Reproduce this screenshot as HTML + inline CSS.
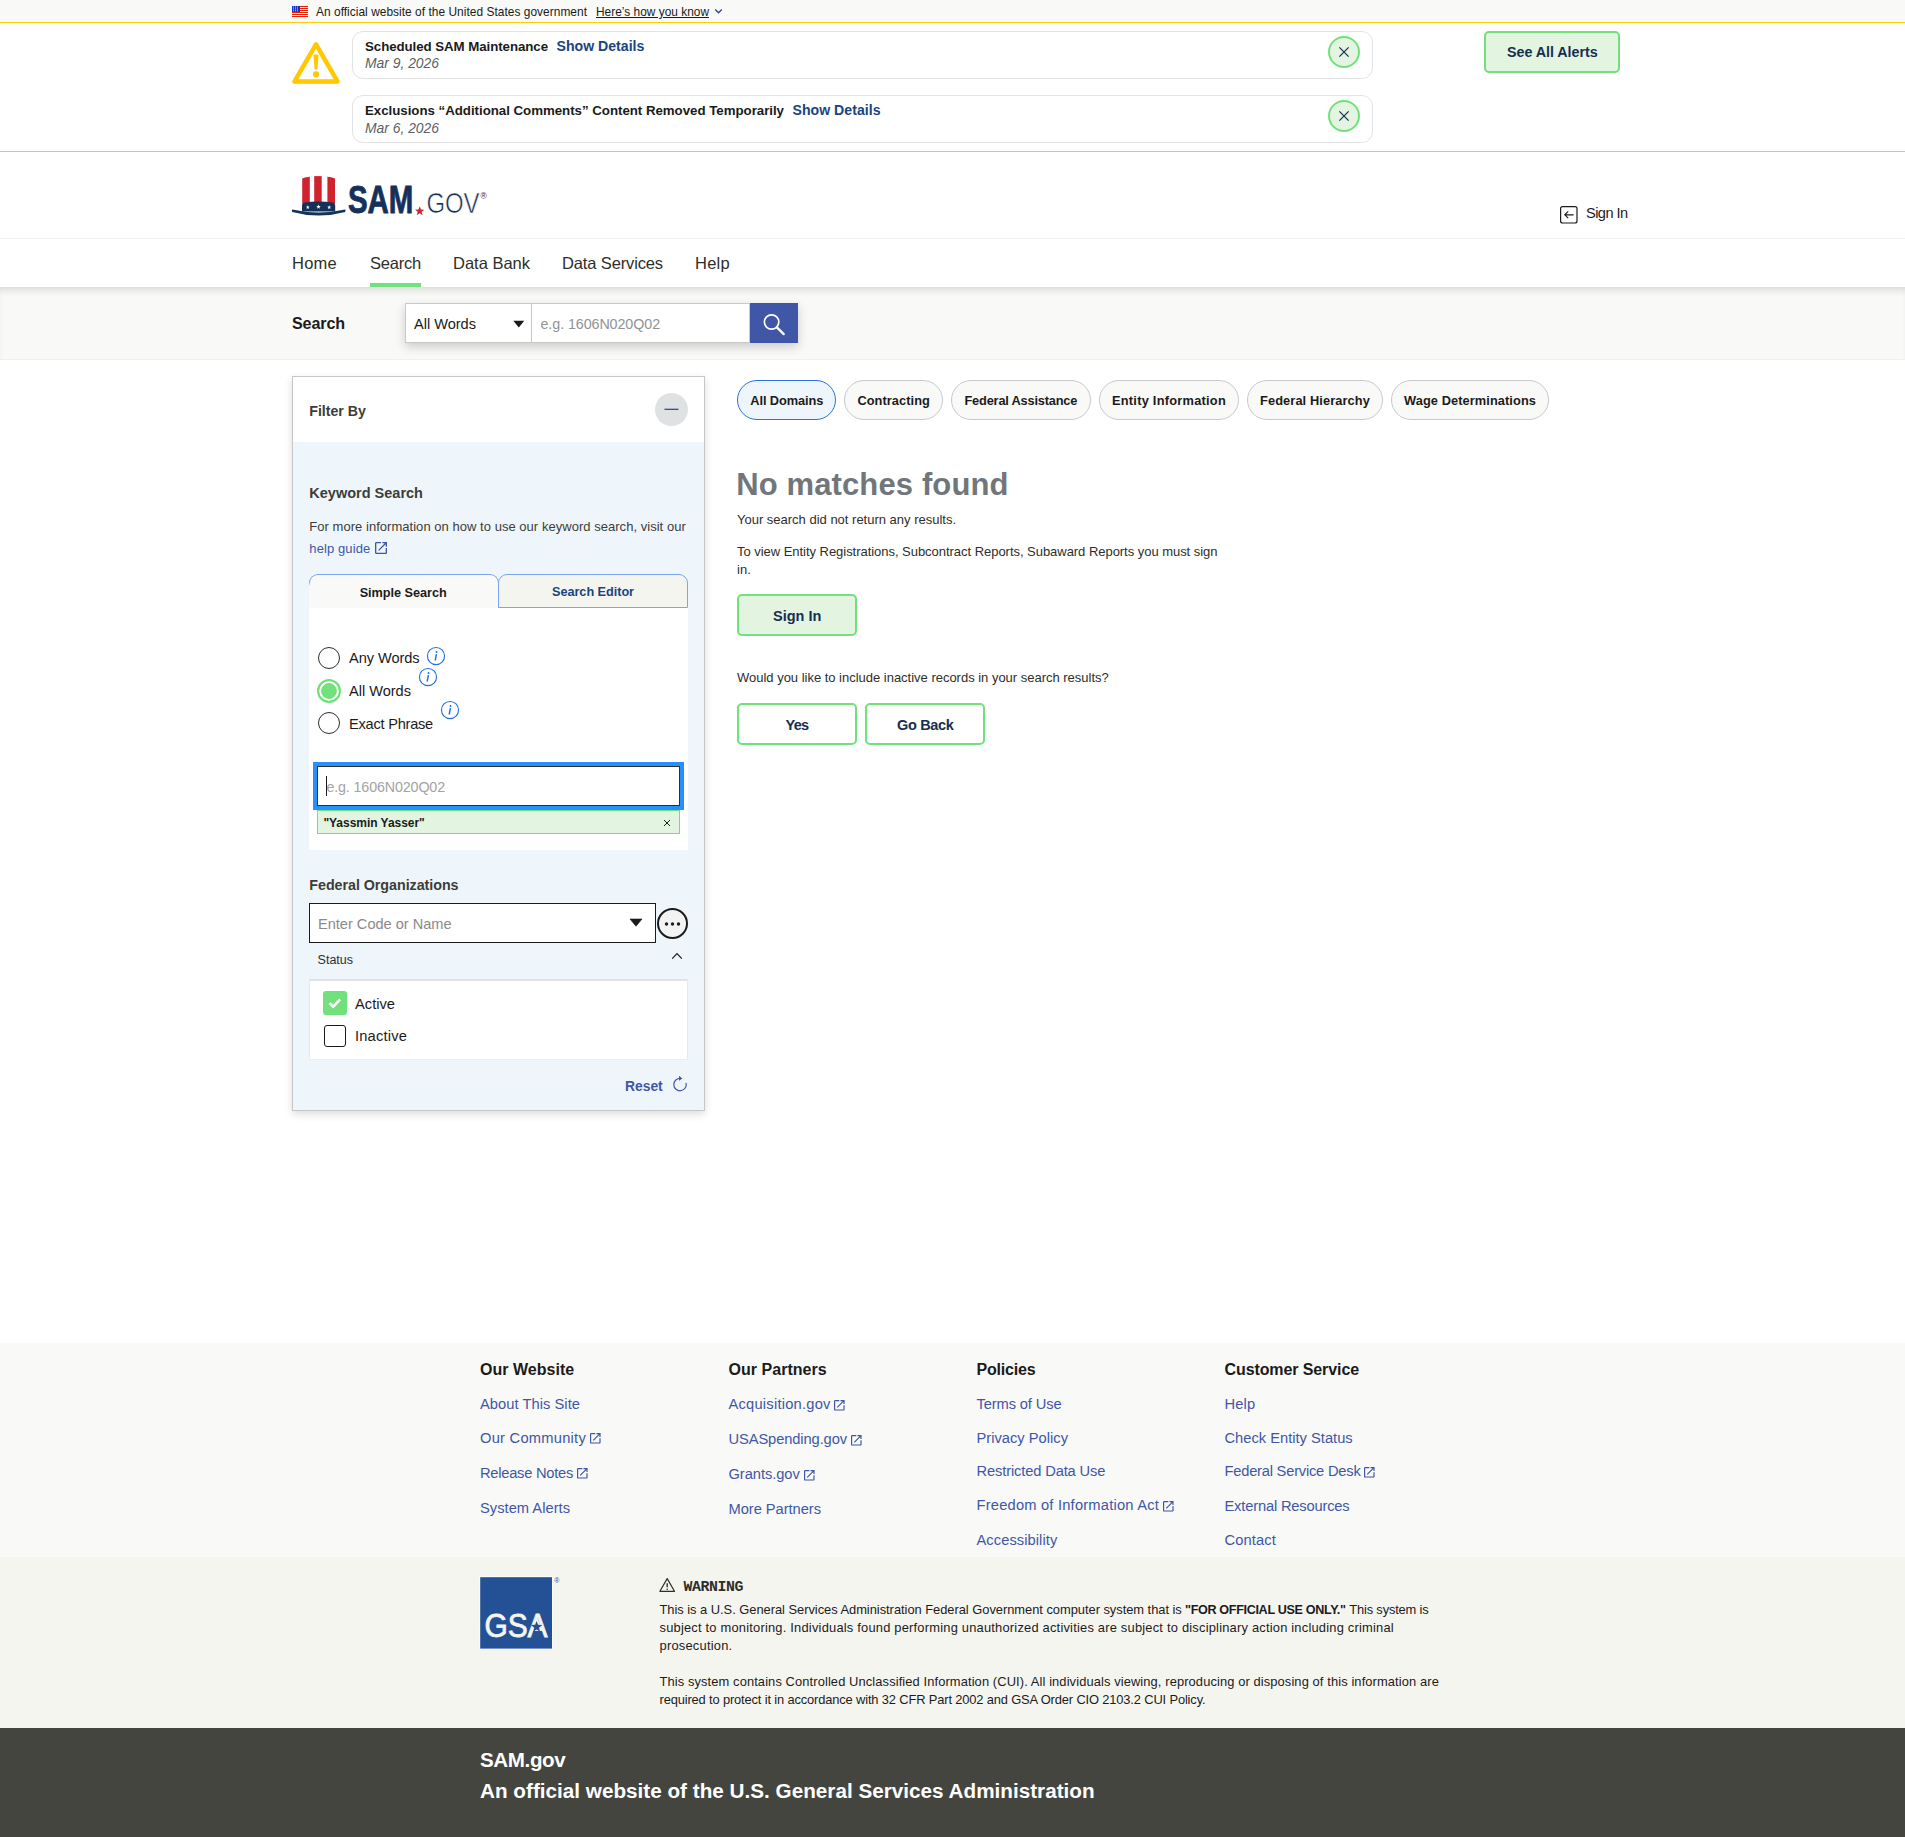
<!DOCTYPE html>
<html lang="en">
<head>
<meta charset="utf-8">
<title>SAM.gov | Search</title>
<style>

*{box-sizing:border-box;margin:0;padding:0}
html,body{background:#fff}
body{font-family:"Liberation Sans", Arial, sans-serif;color:#1b1b1b;width:1905px;height:1837px;overflow:hidden;position:relative;-webkit-font-smoothing:antialiased}
#page{position:relative;width:1905px;height:1837px;overflow:hidden;background:#fff}
#page section,#page header,#page nav,#page main,#page aside,#page footer,#page form,#page ul,#page li,#page fieldset{position:static;list-style:none;border:0}
.a{position:absolute;display:block}
.t{position:absolute;display:block;white-space:nowrap;line-height:1;text-decoration:none;color:#1b1b1b}
a.t{color:#3f57a6}
svg{position:absolute;overflow:visible}
button{font-family:inherit;cursor:pointer}
.btn{position:absolute;border:2px solid #70e17b;border-radius:5px;background:#e3f5e1}
.btn.o{background:#fff}
.pill{position:absolute;height:40px;top:380px;border:1px solid #c6cace;border-radius:20px;background:#f9f9f7}
.pill.on{border-color:#2672de;background:#eff6fb}
.card{position:absolute;left:352px;width:1021px;height:48px;border:1px solid #e3e3e3;border-radius:11px;background:#fff}
.x{position:absolute;width:32px;height:32px;border-radius:50%;border:2px solid #70e17b;background:#e3f5e1}
.radio{position:absolute;width:22px;height:22px;border-radius:50%;border:1.3px solid #2e2e2a;background:#fff}
.radio.on{width:24px;height:24px;border:2.3px solid #70e17b;box-shadow:inset 0 0 0 2.1px #fff;background:#70e17b}
input{font-family:inherit}
input::placeholder{color:var(--ph);opacity:1}

</style>
</head>
<body>
<div id="page">
<section class="usa-banner" aria-label="Official government website">
<div class="a" style="left:0;top:0;width:1905px;height:22px;background:#f9f9f7"></div>
<svg style="left:292px;top:6px" width="16" height="11" viewBox="0 0 16 11" aria-hidden="true"><rect width="16" height="11" fill="#fff"/><rect y="-0.05" width="16" height="1.05" fill="#e52207"/><rect y="1.95" width="16" height="1.05" fill="#e52207"/><rect y="3.95" width="16" height="1.05" fill="#e52207"/><rect y="5.95" width="16" height="1.05" fill="#e52207"/><rect y="7.95" width="16" height="1.05" fill="#e52207"/><rect y="9.95" width="16" height="1.05" fill="#e52207"/><rect width="8" height="6" fill="#1230c4"/><rect x="0.95" y="0.55" width="0.9" height="0.9" fill="#fff"/><rect x="2.95" y="0.55" width="0.9" height="0.9" fill="#fff"/><rect x="4.95" y="0.55" width="0.9" height="0.9" fill="#fff"/><rect x="0.95" y="2.45" width="0.9" height="0.9" fill="#fff"/><rect x="2.95" y="2.45" width="0.9" height="0.9" fill="#fff"/><rect x="4.95" y="2.45" width="0.9" height="0.9" fill="#fff"/><rect x="0.95" y="4.35" width="0.9" height="0.9" fill="#fff"/><rect x="2.95" y="4.35" width="0.9" height="0.9" fill="#fff"/><rect x="4.95" y="4.35" width="0.9" height="0.9" fill="#fff"/></svg>
<span class="t" style="left:316.00px;top:5px;font-size:11.9px;line-height:14px;letter-spacing:0.043px;">An official website of the United States government</span>
<a href="#" class="t" style="left:596.00px;top:5px;font-size:11.9px;line-height:14px;color:#1b1b1b;letter-spacing:0.010px;text-decoration:underline;">Here’s how you know</a>
<svg style="left:714px;top:8px" width="9" height="7" viewBox="0 0 9 7"><path d="M1.2 1.5 L4.5 4.8 L7.8 1.5" fill="none" stroke="#2f4a9c" stroke-width="1.4"/></svg>
</section>
<section class="alerts" aria-label="System alerts">
<div class="a" style="left:0;top:22px;width:1905px;height:130px;background:#fff;border-top:1px solid #fdcb08;border-bottom:1px solid #fdcb08"></div>
<svg style="left:290px;top:40px" width="52" height="46" viewBox="290 40 52 46" aria-hidden="true"><path d="M316 44.4 L294.4 81.6 L337.6 81.6 Z" fill="none" stroke="#ffc800" stroke-width="4.5" stroke-linejoin="round"/><path d="M313.4 55.2 Q316 53.2 318.6 55.2 L317.4 69.5 L314.6 69.5 Z" fill="#ffc800"/><circle cx="316" cy="74.3" r="3.1" fill="#ffc800"/></svg>
<article class="card" style="top:31px">
<strong class="t" style="left:12.00px;top:7px;font-size:13.3px;line-height:15px;font-weight:700;letter-spacing:-0.069px;">Scheduled SAM Maintenance</strong>
<a href="#" class="t" style="left:203.60px;top:6px;font-size:14.1px;line-height:16px;font-weight:700;color:#1a4480;">Show Details</a>
<time class="t" style="left:12.00px;top:23px;font-size:13.9px;line-height:16px;font-style:italic;color:#5c5f63;letter-spacing:-0.013px;">Mar 9, 2026</time>
<button class="x" style="left:975px;top:4px" aria-label="Close alert"><svg style="left:7.5px;top:7.5px" width="12" height="12" viewBox="0 0 12 12"><path d="M1.4 1.4 L10.6 10.6 M10.6 1.4 L1.4 10.6" stroke="#162e51" stroke-width="1.25" fill="none"/></svg></button></article>
<article class="card" style="top:95px">
<strong class="t" style="left:12.00px;top:7px;font-size:13.3px;line-height:15px;font-weight:700;letter-spacing:-0.032px;">Exclusions “Additional Comments” Content Removed Temporarily</strong>
<a href="#" class="t" style="left:439.50px;top:6px;font-size:14.1px;line-height:16px;font-weight:700;color:#1a4480;letter-spacing:0.023px;">Show Details</a>
<time class="t" style="left:12.00px;top:24px;font-size:13.9px;line-height:16px;font-style:italic;color:#5c5f63;letter-spacing:-0.013px;">Mar 6, 2026</time>
<button class="x" style="left:975px;top:4px" aria-label="Close alert"><svg style="left:7.5px;top:7.5px" width="12" height="12" viewBox="0 0 12 12"><path d="M1.4 1.4 L10.6 10.6 M10.6 1.4 L1.4 10.6" stroke="#162e51" stroke-width="1.25" fill="none"/></svg></button></article>
<button class="btn" style="left:1484px;top:31px;width:136px;height:42px"><span class="t" style="left:21.00px;top:11px;font-size:14.3px;line-height:16px;font-weight:700;color:#162e51;letter-spacing:-0.038px;">See All Alerts</span></button>
</section>
<header>
<div class="a" style="left:0;top:238px;width:1905px;height:1px;background:#f3f3ef"></div>
<svg style="left:288px;top:172px" width="204" height="48" viewBox="288 172 204 48" role="img" aria-label="SAM.gov"><path d="M302.2 178.4 Q306 177 309.8 176.7 L309.8 203.5 L302.2 203.5 Z" fill="#d1232f"/><path d="M314.2 176.1 L321.7 176.1 L321.7 203.5 L314.2 203.5 Z" fill="#d1232f"/><path d="M327.4 176.7 Q331.2 177 335 178.4 L335 203.5 L327.4 203.5 Z" fill="#d1232f"/><path d="M302 211.6 L302 205.2 Q302 203 304.6 202.6 Q318.6 200.4 332.6 202.6 Q335.2 203 335.2 205.2 L335.2 211.6 Z" fill="#15315a"/><path d="M292.2 209.6 Q318.6 215.6 345.2 209.6 Q345.9 210.8 345.2 212 Q318.6 219.2 292.2 212 Q291.5 210.8 292.2 209.6 Z" fill="#15315a"/><polygon points="307.80,205.30 308.29,206.62 309.70,206.68 308.60,207.56 308.98,208.92 307.80,208.14 306.62,208.92 307.00,207.56 305.90,206.68 307.31,206.62" fill="#fff"/><polygon points="318.50,204.40 319.09,205.98 320.78,206.06 319.46,207.11 319.91,208.74 318.50,207.81 317.09,208.74 317.54,207.11 316.22,206.06 317.91,205.98" fill="#fff"/><polygon points="329.20,205.30 329.69,206.62 331.10,206.68 330.00,207.56 330.38,208.92 329.20,208.14 328.02,208.92 328.40,207.56 327.30,206.68 328.71,206.62" fill="#fff"/><polygon points="419.70,206.30 420.91,209.54 424.36,209.69 421.66,211.84 422.58,215.16 419.70,213.26 416.82,215.16 417.74,211.84 415.04,209.69 418.49,209.54" fill="#d1232f"/><text x="347.9" y="213" font-family='"Liberation Sans", Arial, sans-serif' font-weight="700" font-size="39.5" fill="#15315a" stroke="#15315a" stroke-width="0.9" stroke-linejoin="round" textLength="65.4" lengthAdjust="spacingAndGlyphs">SAM</text><text x="426.4" y="213.2" font-family='"Liberation Sans", Arial, sans-serif' font-weight="400" font-size="30" fill="#15315a" stroke="#fff" stroke-width="0.6" textLength="53.2" lengthAdjust="spacingAndGlyphs">GOV</text><text x="480.6" y="199" font-family='"Liberation Sans", Arial, sans-serif' font-size="8.5" fill="#15315a">®</text></svg>
<svg style="left:1559px;top:205px" width="20" height="20" viewBox="1559 205 20 20" aria-hidden="true"><rect x="1560.6" y="206.6" width="16.4" height="16.4" rx="2" fill="none" stroke="#1b1b1b" stroke-width="1.2"/><path d="M1573.6 214.8 L1565 214.8 M1568.2 211.4 L1564.8 214.8 L1568.2 218.2" fill="none" stroke="#1b1b1b" stroke-width="1.2"/></svg>
<a href="#" class="t" style="left:1586.00px;top:205px;font-size:14.6px;line-height:16px;color:#1b1b1b;letter-spacing:-0.562px;">Sign In</a>
</header>
<nav aria-label="Primary navigation">
<a href="#" class="t" style="left:292.00px;top:254px;font-size:16.5px;line-height:18px;color:#2e2e2a;letter-spacing:0.246px;">Home</a>
<a href="#" class="t" style="left:370.00px;top:254px;font-size:16.5px;line-height:18px;color:#2e2e2a;letter-spacing:-0.214px;">Search</a>
<a href="#" class="t" style="left:453.00px;top:254px;font-size:16.5px;line-height:18px;color:#2e2e2a;letter-spacing:-0.005px;">Data Bank</a>
<a href="#" class="t" style="left:562.00px;top:254px;font-size:16.5px;line-height:18px;color:#2e2e2a;letter-spacing:-0.132px;">Data Services</a>
<a href="#" class="t" style="left:695.00px;top:254px;font-size:16.5px;line-height:18px;color:#2e2e2a;letter-spacing:0.266px;">Help</a>
<div class="a" style="left:370px;top:283px;width:51px;height:4px;background:#70e17b"></div>
</nav>
<section class="searchbar" aria-label="Search">
<div class="a" style="left:0;top:287px;width:1905px;height:73px;background:#f9f9f7;box-shadow:inset 0 7px 8px -5px rgba(0,0,0,.16);border-bottom:1px solid #f0f0ec"></div>
<span class="t" style="left:292.00px;top:314px;font-size:16.1px;line-height:18px;font-weight:700;letter-spacing:-0.115px;">Search</span>
<div class="a" style="left:405px;top:303px;width:393px;height:40px;box-shadow:0 4px 10px rgba(0,0,0,.18);background:#fff"></div>
<div class="a" style="left:405px;top:303px;width:127px;height:40px;border:1px solid #c9c9c9;background:#fff" role="combobox" aria-label="Search type"><span class="t" style="left:8.00px;top:12px;font-size:14.6px;line-height:16px;letter-spacing:-0.021px;">All Words</span><svg style="left:107px;top:16px" width="12" height="8" viewBox="0 0 12 8"><path d="M0.3 0.8 L11.3 0.8 L5.8 7.4 Z" fill="#1b1b1b"/></svg></div>
<input class="a" type="text" aria-label="Search keywords" placeholder="e.g. 1606N020Q02" style="left:531px;top:303px;width:219px;height:40px;border:1px solid #c9c9c9;padding:2px 0 0 8.50px;font-size:14.3px;line-height:16px;letter-spacing:-0.083px;--ph:#909396;background:#fff;border-radius:0;outline:0;color:#1b1b1b">
<button class="a" style="left:750px;top:303px;width:48px;height:40px;border:0;background:#3f57a6" aria-label="Search"><svg style="left:12px;top:10px" width="26" height="26" viewBox="762 313 26 26"><circle cx="771.6" cy="322" r="7.2" fill="none" stroke="#fff" stroke-width="1.7"/><path d="M776.9 327.4 L783.7 334.1" stroke="#fff" stroke-width="2.3" stroke-linecap="round"/></svg></button>
</section>
<main>
<aside class="filters" aria-label="Filters">
<div class="a" style="left:292px;top:376px;width:413px;height:735px;border:1px solid #c5c6c8;background:#eff6fb;box-shadow:0 3px 8px rgba(0,0,0,.14)"></div>
<div class="a" style="left:293px;top:377px;width:411px;height:65px;background:#fff"></div>
<h2 class="t" style="left:309.30px;top:403px;font-size:14.2px;line-height:16px;font-weight:700;color:#3d3d38;letter-spacing:-0.030px;">Filter By</h2>
<button class="a" style="left:655px;top:393px;width:33px;height:33px;border-radius:50%;border:0;background:#dfe1e2" aria-label="Collapse"><svg style="left:9px;top:15px" width="15" height="3" viewBox="0 0 15 3"><path d="M0.5 1.3 L14.5 1.3" stroke="#1a4480" stroke-width="1.2"/></svg></button>
<h3 class="t" style="left:309.30px;top:485px;font-size:14.5px;line-height:16px;font-weight:700;color:#3d3d38;letter-spacing:0.004px;">Keyword Search</h3>
<span class="t" style="left:309.30px;top:519px;font-size:13.0px;line-height:15px;color:#3d3d38;letter-spacing:0.035px;">For more information on how to use our keyword search, visit our</span>
<a href="#" class="t" style="left:309.30px;top:541px;font-size:13.0px;line-height:15px;color:#3f57a6;letter-spacing:0.100px;">help guide</a>
<svg style="left:375.2px;top:542.2px" width="12" height="12" viewBox="3 3 18 18" aria-hidden="true"><path fill="#3f57a6" d="M19 19H5V5h7V3H5a2 2 0 0 0-2 2v14a2 2 0 0 0 2 2h14c1.1 0 2-.9 2-2v-7h-2v7zM14 3v2h3.59l-9.83 9.83 1.41 1.41L19 6.41V10h2V3h-7z"/></svg>
<div class="a" style="left:309px;top:574px;width:190px;height:34px;border:1px solid #7aa5f2;border-bottom:0;border-radius:9px 9px 0 0;background:#f9f9f7" role="tab" aria-selected="true"><span class="t" style="left:49.70px;top:11px;font-size:12.7px;line-height:14px;font-weight:700;letter-spacing:-0.035px;">Simple Search</span></div><div class="a" style="left:309px;top:582px;width:1px;height:26px;background:linear-gradient(#7aa5f2,#f9f9f7 4px)"></div>
<div class="a" style="left:498px;top:574px;width:190px;height:34px;border:1px solid #7aa5f2;border-radius:9px 9px 0 0;background:#f5f5f0" role="tab"><span class="t" style="left:53.00px;top:10px;font-size:12.7px;line-height:14px;font-weight:700;color:#1a4480;letter-spacing:-0.038px;">Search Editor</span></div>
<div class="a" style="left:309px;top:608px;width:379px;height:242px;background:#fff"></div>
<fieldset>
<span class="radio" style="left:318px;top:647px"></span>
<label class="t" style="left:349.00px;top:650px;font-size:14.6px;line-height:16px;letter-spacing:-0.057px;">Any Words</label>
<svg style="left:426.1px;top:646.1px" width="20" height="20" viewBox="0 0 20 20" aria-hidden="true"><circle cx="10" cy="10" r="8.55" fill="none" stroke="#2672de" stroke-width="1.15"/><circle cx="10.55" cy="6.1" r="1.0" fill="#2672de"/><path d="M10.3 8.7 L9.3 13.9" stroke="#2672de" stroke-width="1.5" stroke-linecap="round" fill="none"/></svg>
<span class="radio on" style="left:317px;top:679px"></span>
<label class="t" style="left:349.00px;top:683px;font-size:14.6px;line-height:16px;letter-spacing:-0.021px;">All Words</label>
<svg style="left:418.3px;top:667.1px" width="20" height="20" viewBox="0 0 20 20" aria-hidden="true"><circle cx="10" cy="10" r="8.55" fill="none" stroke="#2672de" stroke-width="1.15"/><circle cx="10.55" cy="6.1" r="1.0" fill="#2672de"/><path d="M10.3 8.7 L9.3 13.9" stroke="#2672de" stroke-width="1.5" stroke-linecap="round" fill="none"/></svg>
<span class="radio" style="left:318px;top:712px"></span>
<label class="t" style="left:349.00px;top:716px;font-size:14.6px;line-height:16px;letter-spacing:-0.233px;">Exact Phrase</label>
<svg style="left:440.2px;top:700.2px" width="20" height="20" viewBox="0 0 20 20" aria-hidden="true"><circle cx="10" cy="10" r="8.55" fill="none" stroke="#2672de" stroke-width="1.15"/><circle cx="10.55" cy="6.1" r="1.0" fill="#2672de"/><path d="M10.3 8.7 L9.3 13.9" stroke="#2672de" stroke-width="1.5" stroke-linecap="round" fill="none"/></svg>
</fieldset>
<div class="a" style="left:313px;top:762px;width:371px;height:48px;background:#2491ff"></div>
<input class="a" type="text" aria-label="Keyword" placeholder="e.g. 1606N020Q02" style="left:317px;top:766px;width:363px;height:40px;border:1px solid #2e2e2a;padding:2px 0 0 8.40px;font-size:14.3px;line-height:16px;letter-spacing:-0.139px;--ph:#a3a3a3;background:#fff;border-radius:0;outline:0;color:#1b1b1b">
<div class="a" style="left:326px;top:776px;width:1px;height:20px;background:#1b1b1b"></div>
<div class="a" style="left:317px;top:810px;width:363px;height:24px;border:1px solid #70e17b;background:#e3f5e1"><span class="t" style="left:5.40px;top:5px;font-size:12.0px;line-height:14px;font-weight:700;letter-spacing:-0.032px;">"Yassmin Yasser"</span><svg style="left:344.5px;top:7.5px" width="8" height="8" viewBox="0 0 8 8"><path d="M1 1 L7 7 M7 1 L1 7" stroke="#1b1b1b" stroke-width="1.0" fill="none"/></svg></div>
<h3 class="t" style="left:309.30px;top:877px;font-size:14.3px;line-height:16px;font-weight:700;color:#3d3d38;letter-spacing:-0.046px;">Federal Organizations</h3>
<input class="a" type="text" aria-label="Federal Organizations" placeholder="Enter Code or Name" style="left:309px;top:903px;width:347px;height:40px;border:1px solid #1b1b1b;padding:2px 0 0 8.00px;font-size:14.6px;line-height:16px;letter-spacing:-0.014px;--ph:#8a8a8a;background:#fff;border-radius:0;outline:0;color:#1b1b1b">
<svg style="left:629px;top:918px" width="14" height="9" viewBox="0 0 14 9"><path d="M1 1 L13 1 L7 8.3 Z" fill="#1b1b1b" stroke="#1b1b1b" stroke-width="0.6" stroke-linejoin="round"/></svg>
<button class="a" style="left:657px;top:908px;width:31px;height:31px;border-radius:50%;border:2px solid #1b1b1b;background:#f3f3f3" aria-label="More options"><svg style="left:5px;top:11.5px" width="17" height="4" viewBox="0 0 17 4"><circle cx="2.5" cy="2" r="1.7" fill="#1b1b1b"/><circle cx="8.5" cy="2" r="1.7" fill="#1b1b1b"/><circle cx="14.5" cy="2" r="1.7" fill="#1b1b1b"/></svg></button>
<span class="t" style="left:317.60px;top:953px;font-size:12.5px;line-height:14px;color:#2e2e2a;letter-spacing:-0.006px;">Status</span>
<svg style="left:670.5px;top:951.5px" width="12" height="8" viewBox="0 0 12 8"><path d="M1.2 6.6 L6 1.6 L10.8 6.6" fill="none" stroke="#1b1b1b" stroke-width="1.2"/></svg>
<div class="a" style="left:309px;top:979px;width:379px;height:81px;background:#fff;border-top:2px solid #e1e3e5;border-left:1px solid #e6eaee;border-right:1px solid #e6eaee;border-bottom:1px solid #e9eef3"></div>
<span class="a" style="left:323px;top:991px;width:24px;height:24px;border-radius:3px;background:#70e17b"><svg style="left:5px;top:6px" width="14" height="12" viewBox="0 0 14 12"><path d="M1.6 6 L5.2 9.6 L12.2 2.4" fill="none" stroke="#fff" stroke-width="2.6"/></svg></span>
<label class="t" style="left:355.00px;top:996px;font-size:14.7px;line-height:16px;">Active</label>
<span class="a" style="left:324px;top:1025px;width:22px;height:22px;border-radius:3px;border:1.6px solid #1b1b1b;background:#fff"></span>
<label class="t" style="left:355.00px;top:1028px;font-size:14.7px;line-height:16px;letter-spacing:0.172px;">Inactive</label>
<a href="#" class="t" style="left:625.00px;top:1078px;font-size:13.9px;line-height:16px;font-weight:700;color:#3f57a6;letter-spacing:-0.029px;">Reset</a>
<svg style="left:671px;top:1075px" width="18" height="18" viewBox="0 0 18 18"><path d="M9.6 3.4 A6.2 6.2 0 1 0 15 8" fill="none" stroke="#3f57a6" stroke-width="1.2"/><path d="M8 0.8 L11.4 3.5 L8 5.8 Z" fill="#3f57a6"/></svg>
</aside>
<section class="results">
<button class="pill on" style="left:737px;width:99px"><span class="t" style="left:12.30px;top:12px;font-size:12.8px;line-height:15px;font-weight:700;letter-spacing:-0.096px;">All Domains</span></button>
<button class="pill" style="left:844px;width:99px"><span class="t" style="left:12.40px;top:12px;font-size:12.8px;line-height:15px;font-weight:700;letter-spacing:0.072px;">Contracting</span></button>
<button class="pill" style="left:951px;width:140px"><span class="t" style="left:12.50px;top:12px;font-size:12.8px;line-height:15px;font-weight:700;letter-spacing:-0.194px;">Federal Assistance</span></button>
<button class="pill" style="left:1099px;width:140px"><span class="t" style="left:12.00px;top:12px;font-size:12.8px;line-height:15px;font-weight:700;letter-spacing:0.251px;">Entity Information</span></button>
<button class="pill" style="left:1247px;width:136px"><span class="t" style="left:12.00px;top:12px;font-size:12.8px;line-height:15px;font-weight:700;letter-spacing:0.110px;">Federal Hierarchy</span></button>
<button class="pill" style="left:1391px;width:158px"><span class="t" style="left:12.00px;top:12px;font-size:12.8px;line-height:15px;font-weight:700;letter-spacing:0.086px;">Wage Determinations</span></button>
<h1 class="t" style="left:736.20px;top:467px;font-size:31.0px;line-height:35px;font-weight:700;color:#71767a;letter-spacing:0.125px;">No matches found</h1>
<p class="t" style="left:737.00px;top:512px;font-size:13.0px;line-height:15px;color:#2e2e2a;letter-spacing:-0.005px;">Your search did not return any results.</p>
<p class="t" style="left:737.00px;top:544px;font-size:13.0px;line-height:15px;color:#2e2e2a;letter-spacing:-0.036px;">To view Entity Registrations, Subcontract Reports, Subaward Reports you must sign</p>
<p class="t" style="left:737.00px;top:562px;font-size:13.0px;line-height:15px;color:#2e2e2a;letter-spacing:0.089px;">in.</p>
<button class="btn" style="left:737px;top:594px;width:120px;height:42px"><span class="t" style="left:34.00px;top:12px;font-size:14.5px;line-height:16px;font-weight:700;color:#162e51;letter-spacing:0.022px;">Sign In</span></button>
<p class="t" style="left:737.00px;top:670px;font-size:13.0px;line-height:15px;color:#2e2e2a;letter-spacing:-0.014px;">Would you like to include inactive records in your search results?</p>
<button class="btn o" style="left:737px;top:703px;width:120px;height:42px"><span class="t" style="left:46.50px;top:12px;font-size:14.5px;line-height:16px;font-weight:700;color:#162e51;letter-spacing:-0.667px;">Yes</span></button>
<button class="btn o" style="left:865px;top:703px;width:120px;height:42px"><span class="t" style="left:30.00px;top:12px;font-size:14.5px;line-height:16px;font-weight:700;color:#162e51;letter-spacing:-0.335px;">Go Back</span></button>
</section>
</main>
<footer>
<div class="a" style="left:0;top:1343px;width:1905px;height:214px;background:#f9f9f7"></div>
<div>
<h4 class="t" style="left:480.00px;top:1361px;font-size:16.0px;line-height:17px;font-weight:700;letter-spacing:0.032px;">Our Website</h4>
<ul>
<li><a href="#" class="t" style="left:480.00px;top:1396px;font-size:14.7px;line-height:16px;color:#3f57a6;letter-spacing:0.044px;">About This Site</a></li>
<li><a href="#" class="t" style="left:480.00px;top:1430px;font-size:14.7px;line-height:16px;color:#3f57a6;letter-spacing:0.243px;">Our Community</a><svg style="left:589.8px;top:1432.6px" width="10.6" height="10.6" viewBox="3 3 18 18" aria-hidden="true"><path fill="#3f57a6" d="M19 19H5V5h7V3H5a2 2 0 0 0-2 2v14a2 2 0 0 0 2 2h14c1.1 0 2-.9 2-2v-7h-2v7zM14 3v2h3.59l-9.83 9.83 1.41 1.41L19 6.41V10h2V3h-7z"/></svg></li>
<li><a href="#" class="t" style="left:480.00px;top:1465px;font-size:14.7px;line-height:16px;color:#3f57a6;letter-spacing:-0.257px;">Release Notes</a><svg style="left:576.8px;top:1467.6px" width="10.6" height="10.6" viewBox="3 3 18 18" aria-hidden="true"><path fill="#3f57a6" d="M19 19H5V5h7V3H5a2 2 0 0 0-2 2v14a2 2 0 0 0 2 2h14c1.1 0 2-.9 2-2v-7h-2v7zM14 3v2h3.59l-9.83 9.83 1.41 1.41L19 6.41V10h2V3h-7z"/></svg></li>
<li><a href="#" class="t" style="left:480.00px;top:1500px;font-size:14.7px;line-height:16px;color:#3f57a6;letter-spacing:0.017px;">System Alerts</a></li>
</ul></div>
<div>
<h4 class="t" style="left:728.50px;top:1361px;font-size:16.0px;line-height:17px;font-weight:700;letter-spacing:0.032px;">Our Partners</h4>
<ul>
<li><a href="#" class="t" style="left:728.50px;top:1396px;font-size:14.7px;line-height:16px;color:#3f57a6;letter-spacing:0.220px;">Acquisition.gov</a><svg style="left:834.4px;top:1399.7px" width="10.6" height="10.6" viewBox="3 3 18 18" aria-hidden="true"><path fill="#3f57a6" d="M19 19H5V5h7V3H5a2 2 0 0 0-2 2v14a2 2 0 0 0 2 2h14c1.1 0 2-.9 2-2v-7h-2v7zM14 3v2h3.59l-9.83 9.83 1.41 1.41L19 6.41V10h2V3h-7z"/></svg></li>
<li><a href="#" class="t" style="left:728.50px;top:1431px;font-size:14.7px;line-height:16px;color:#3f57a6;letter-spacing:-0.103px;">USASpending.gov</a><svg style="left:850.8px;top:1434.7px" width="10.6" height="10.6" viewBox="3 3 18 18" aria-hidden="true"><path fill="#3f57a6" d="M19 19H5V5h7V3H5a2 2 0 0 0-2 2v14a2 2 0 0 0 2 2h14c1.1 0 2-.9 2-2v-7h-2v7zM14 3v2h3.59l-9.83 9.83 1.41 1.41L19 6.41V10h2V3h-7z"/></svg></li>
<li><a href="#" class="t" style="left:728.50px;top:1466px;font-size:14.7px;line-height:16px;color:#3f57a6;letter-spacing:-0.064px;">Grants.gov</a><svg style="left:803.5px;top:1469.7px" width="10.6" height="10.6" viewBox="3 3 18 18" aria-hidden="true"><path fill="#3f57a6" d="M19 19H5V5h7V3H5a2 2 0 0 0-2 2v14a2 2 0 0 0 2 2h14c1.1 0 2-.9 2-2v-7h-2v7zM14 3v2h3.59l-9.83 9.83 1.41 1.41L19 6.41V10h2V3h-7z"/></svg></li>
<li><a href="#" class="t" style="left:728.50px;top:1501px;font-size:14.7px;line-height:16px;color:#3f57a6;letter-spacing:-0.043px;">More Partners</a></li>
</ul></div>
<div>
<h4 class="t" style="left:976.50px;top:1361px;font-size:16.0px;line-height:17px;font-weight:700;letter-spacing:-0.186px;">Policies</h4>
<ul>
<li><a href="#" class="t" style="left:976.50px;top:1396px;font-size:14.7px;line-height:16px;color:#3f57a6;letter-spacing:-0.126px;">Terms of Use</a></li>
<li><a href="#" class="t" style="left:976.50px;top:1430px;font-size:14.7px;line-height:16px;color:#3f57a6;letter-spacing:0.006px;">Privacy Policy</a></li>
<li><a href="#" class="t" style="left:976.50px;top:1463px;font-size:14.7px;line-height:16px;color:#3f57a6;letter-spacing:-0.138px;">Restricted Data Use</a></li>
<li><a href="#" class="t" style="left:976.50px;top:1497px;font-size:14.7px;line-height:16px;color:#3f57a6;letter-spacing:0.206px;">Freedom of Information Act</a><svg style="left:1162.8px;top:1500.7px" width="10.6" height="10.6" viewBox="3 3 18 18" aria-hidden="true"><path fill="#3f57a6" d="M19 19H5V5h7V3H5a2 2 0 0 0-2 2v14a2 2 0 0 0 2 2h14c1.1 0 2-.9 2-2v-7h-2v7zM14 3v2h3.59l-9.83 9.83 1.41 1.41L19 6.41V10h2V3h-7z"/></svg></li>
<li><a href="#" class="t" style="left:976.50px;top:1532px;font-size:14.7px;line-height:16px;color:#3f57a6;letter-spacing:0.062px;">Accessibility</a></li>
</ul></div>
<div>
<h4 class="t" style="left:1224.50px;top:1361px;font-size:16.0px;line-height:17px;font-weight:700;letter-spacing:-0.098px;">Customer Service</h4>
<ul>
<li><a href="#" class="t" style="left:1224.50px;top:1396px;font-size:14.7px;line-height:16px;color:#3f57a6;letter-spacing:0.145px;">Help</a></li>
<li><a href="#" class="t" style="left:1224.50px;top:1430px;font-size:14.7px;line-height:16px;color:#3f57a6;">Check Entity Status</a></li>
<li><a href="#" class="t" style="left:1224.50px;top:1463px;font-size:14.7px;line-height:16px;color:#3f57a6;letter-spacing:-0.220px;">Federal Service Desk</a><svg style="left:1364.3px;top:1466.7px" width="10.6" height="10.6" viewBox="3 3 18 18" aria-hidden="true"><path fill="#3f57a6" d="M19 19H5V5h7V3H5a2 2 0 0 0-2 2v14a2 2 0 0 0 2 2h14c1.1 0 2-.9 2-2v-7h-2v7zM14 3v2h3.59l-9.83 9.83 1.41 1.41L19 6.41V10h2V3h-7z"/></svg></li>
<li><a href="#" class="t" style="left:1224.50px;top:1498px;font-size:14.7px;line-height:16px;color:#3f57a6;letter-spacing:-0.176px;">External Resources</a></li>
<li><a href="#" class="t" style="left:1224.50px;top:1532px;font-size:14.7px;line-height:16px;color:#3f57a6;letter-spacing:0.125px;">Contact</a></li>
</ul></div>
<div class="a" style="left:0;top:1557px;width:1905px;height:171px;background:#f5f5f0"></div>
<svg style="left:478px;top:1575px" width="86" height="76" viewBox="478 1575 86 76" role="img" aria-label="GSA"><rect x="479.5" y="1576.5" width="73" height="72.6" fill="#fff"/><rect x="480.2" y="1577.2" width="71.8" height="71.4" fill="#245196"/><text x="484.4" y="1637.1" font-family='"Liberation Sans", Arial, sans-serif' font-size="33.6" fill="#f4f4f0" stroke="#f4f4f0" stroke-width="0.8" textLength="63.2" lengthAdjust="spacingAndGlyphs">GSA</text><polygon points="536.7,1616.5 531.2,1629.6 542.2,1629.6" fill="#f4f4f0"/><polygon points="536.60,1620.90 538.08,1624.86 542.31,1625.05 539.00,1627.68 540.13,1631.75 536.60,1629.42 533.07,1631.75 534.20,1627.68 530.89,1625.05 535.12,1624.86" fill="#245196"/><text x="554.3" y="1582.8" font-family='"Liberation Sans", Arial, sans-serif' font-size="7" fill="#245196">®</text></svg>
<svg style="left:658px;top:1576px" width="19" height="18" viewBox="658 1576 19 18" aria-hidden="true"><path d="M667.2 1578.6 L659.9 1591.3 L674.5 1591.3 Z" fill="none" stroke="#2e2e2a" stroke-width="1.2" stroke-linejoin="round"/><path d="M667.2 1583.2 L667.2 1587.2" stroke="#2e2e2a" stroke-width="1.4"/><circle cx="667.2" cy="1589.2" r="0.8" fill="#2e2e2a"/></svg>
<span class="t" style="left:683.40px;top:1579px;font-size:14.9px;line-height:16px;font-weight:700;color:#2e2e2a;font-family:'Liberation Mono', monospace;letter-spacing:-0.423px;">WARNING</span>
<p><span class="t" style="left:659.50px;top:1602px;font-size:12.9px;line-height:15px;letter-spacing:-0.032px;">This is a U.S. General Services Administration Federal Government computer system that is</span><b class="t" style="left:1185.00px;top:1603px;font-size:12.6px;line-height:14px;font-weight:700;letter-spacing:-0.337px;">"FOR OFFICIAL USE ONLY."</b><span class="t" style="left:1349.30px;top:1602px;font-size:12.9px;line-height:15px;letter-spacing:-0.175px;">This system is</span></p>
<p class="t" style="left:659.50px;top:1620px;font-size:12.9px;line-height:15px;letter-spacing:0.205px;">subject to monitoring. Individuals found performing unauthorized activities are subject to disciplinary action including criminal</p>
<p class="t" style="left:659.50px;top:1638px;font-size:12.9px;line-height:15px;letter-spacing:0.222px;">prosecution.</p>
<p class="t" style="left:659.50px;top:1674px;font-size:12.9px;line-height:15px;letter-spacing:0.104px;">This system contains Controlled Unclassified Information (CUI). All individuals viewing, reproducing or disposing of this information are</p>
<p class="t" style="left:659.50px;top:1692px;font-size:12.9px;line-height:15px;letter-spacing:-0.149px;">required to protect it in accordance with 32 CFR Part 2002 and GSA Order CIO 2103.2 CUI Policy.</p>
<div class="a" style="left:0;top:1728px;width:1905px;height:109px;background:#454540"></div>
<span class="t" style="left:480.00px;top:1748px;font-size:20.6px;line-height:23px;font-weight:700;color:#fff;letter-spacing:-0.401px;">SAM.gov</span>
<span class="t" style="left:480.00px;top:1779px;font-size:20.7px;line-height:23px;font-weight:700;color:#fff;letter-spacing:0.005px;">An official website of the U.S. General Services Administration</span>
</footer>
</div>
</body>
</html>
